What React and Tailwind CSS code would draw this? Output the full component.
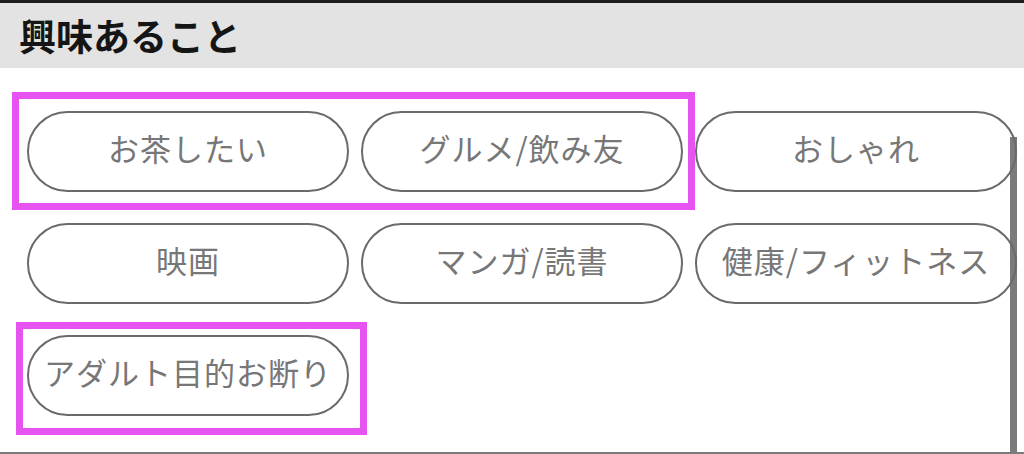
import React from 'react';

const interests = [
  'お茶したい',
  'グルメ/飲み友',
  'おしゃれ',
  '映画',
  'マンガ/読書',
  '健康/フィットネス',
  'アダルト目的お断り',
];

const App = () => {
  return (
    <div
      className="relative w-[1024px] h-[454px] overflow-hidden bg-white border-t-[3px] border-[#1c1c1c] border-b-2 border-b-[#7a7a7a]"
      style={{ fontFamily: '"Noto Sans CJK JP", "Noto Sans", sans-serif' }}
    >
      <div className="h-[65px] bg-[#e3e3e3] flex items-center pl-[19px]">
        <h2 className="text-[37px] font-bold text-[#151515] leading-none">興味あること</h2>
      </div>

      {/* scrollbar */}
      <div className="absolute right-[7px] top-[134px] bottom-0 w-[7px] bg-[#7b7b7b]" />

      <div className="relative grid grid-cols-[322px_322px_322px] gap-x-[12px] gap-y-[31px] pl-[27px] pt-[43px]">
        {interests.map((item, idx) => (
          <button
            key={idx}
            className="h-[81px] rounded-full border-2 border-[#6a6a6a] flex items-center justify-center pb-[8px] text-[31px] tracking-[1px] text-[#777777] leading-none whitespace-nowrap"
          >
            {item}
          </button>
        ))}
      </div>

      {/* highlight annotations */}
      <div className="absolute left-[12px] top-[89px] w-[683px] h-[118px] border-[7px] border-[#e653f0]" />
      <div className="absolute left-[16px] top-[319px] w-[351px] h-[113px] border-[7px] border-[#e653f0]" />
    </div>
  );
};

export default App;
